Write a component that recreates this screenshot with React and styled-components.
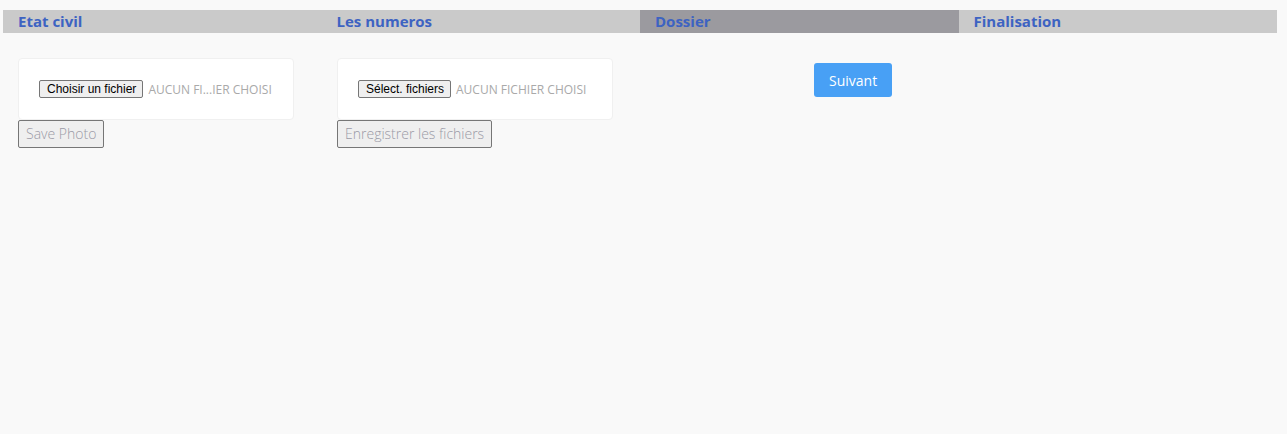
import React from 'react';
import styled, { createGlobalStyle } from 'styled-components';

const GlobalStyle = createGlobalStyle`
  body {
    margin: 0;
    background: #f9f9f9;
    font-family: "Open Sans", "Liberation Sans", sans-serif;
  }
`;

const Page = styled.div`
  padding: 10px 10px 0 3px;
  min-height: 424px;
`;

const Steps = styled.ul`
  display: grid;
  grid-template-columns: repeat(4, 1fr);
  width: 1274px;
  margin: 0;
  padding: 0;
  list-style: none;
  background: #cacaca;
`;

const Step = styled.li`
  height: 23px;
  padding: 0 15px;
  background: ${(p) => (p.active ? '#9b9a9f' : 'transparent')};
  color: #3d63c2;
  font-size: 15px;
  font-weight: 700;
  line-height: 23px;
`;

const Row = styled.div`
  display: flex;
  align-items: flex-start;
  margin-top: 25px;
  padding-left: 15px;
`;

const Column = styled.div`
  display: flex;
  flex-direction: column;
  align-items: flex-start;
  width: 319px;
`;

const Card = styled.div`
  box-sizing: border-box;
  display: flex;
  align-items: center;
  width: 276px;
  height: 62px;
  padding-left: 20px;
  background: #fff;
  border: 1px solid #f0f0f0;
  border-radius: 4px;
`;

const FileButton = styled.span`
  box-sizing: border-box;
  display: inline-flex;
  align-items: center;
  height: 18px;
  padding: 0 6px 0 7px;
  background: #efefef;
  border: 1px solid #767676;
  border-radius: 2px;
  color: #000;
  font-family: "Liberation Sans", Arial, sans-serif;
  font-size: 12px;
`;

const FileStatus = styled.span`
  margin-left: 5px;
  color: #a9a9a9;
  font-size: 12px;
  font-weight: 400;
  text-transform: uppercase;
`;

const SaveButton = styled.button`
  height: 28px;
  padding: 0 7px 1px;
  background: #efefef;
  border: 1px solid #767676;
  border-radius: 2px;
  color: #9a9aa6;
  font-family: "Open Sans", sans-serif;
  font-size: 14px;
  font-weight: 300;
`;

const NextButton = styled.button`
  margin: 5px 0 0 158px;
  height: 34px;
  padding: 0 15px;
  background: #48a0f5;
  border: none;
  border-radius: 3px;
  color: #fff;
  font-family: "Open Sans", sans-serif;
  font-size: 14px;
  font-weight: 400;
`;

const steps = ['Etat civil', 'Les numeros', 'Dossier', 'Finalisation'];

export default function App() {
  return (
    <>
      <GlobalStyle />
      <Page>
        <Steps>
          {steps.map((s) => (
            <Step key={s} active={s === 'Dossier'}>
              {s}
            </Step>
          ))}
        </Steps>
        <Row>
          <Column>
            <Card>
              <FileButton>Choisir un fichier</FileButton>
              <FileStatus>Aucun fi...ier choisi</FileStatus>
            </Card>
            <SaveButton>Save Photo</SaveButton>
          </Column>
          <Column>
            <Card>
              <FileButton>Sélect. fichiers</FileButton>
              <FileStatus>Aucun fichier choisi</FileStatus>
            </Card>
            <SaveButton>Enregistrer les fichiers</SaveButton>
          </Column>
          <Column>
            <NextButton>Suivant</NextButton>
          </Column>
        </Row>
      </Page>
    </>
  );
}
